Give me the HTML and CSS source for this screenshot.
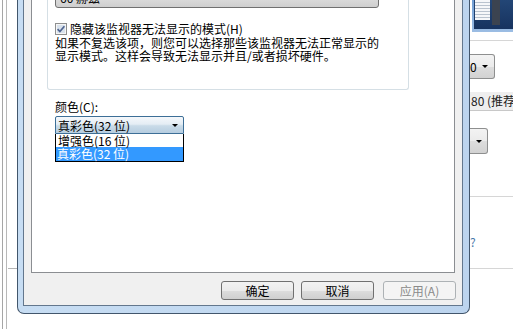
FILE: index.html
```html
<!DOCTYPE html>
<html lang="zh-CN">
<head>
  <meta charset="UTF-8" />
  <title>显示属性</title>
  <link rel="stylesheet" href="styles.css">
</head>
<body>
  <div class="desk">

    <!-- window behind, left edge -->
    <div class="bg-left">
      <div class="rail"></div>
      <div class="stub"></div>
    </div>

    <!-- dialog -->
    <div class="dialog">
      <div class="panel">
        <div class="content">
          <div class="group">
            <div class="combo combo-wide"><span>60 赫兹</span><i class="arrow"></i></div>
            <label class="check-row">
              <svg class="cb" width="12" height="12" viewBox="0 0 12 12">
                <rect x="0.5" y="0.5" width="11" height="11" fill="#f6f6f6" stroke="#8e8f8f"/>
                <rect x="2" y="2" width="8" height="8" fill="#d9e2ec"/>
                <path d="M2.6 6.2 L4.9 8.6 L9.4 3.2" fill="none" stroke="#4f6490" stroke-width="1.7"/>
              </svg>
              <span>隐藏该监视器无法显示的模式(H)</span>
            </label>
            <p class="note">如果不复选该项，则您可以选择那些该监视器无法正常显示的<br>显示模式。这样会导致无法显示并且/或者损坏硬件。</p>
          </div>

          <div class="color-field">
            <div class="field-label">颜色(C):</div>
            <div class="combo combo-focus"><span>真彩色(32 位)</span><i class="arrow"></i></div>
            <ul class="drop-list">
              <li>增强色(16 位)</li>
              <li class="selected">真彩色(32 位)</li>
            </ul>
          </div>
        </div>

        <div class="footer">
          <button>确定</button>
          <button>取消</button>
          <button class="btn-apply">应用(A)</button>
        </div>
      </div>
    </div>

    <!-- window behind, right edge -->
    <div class="bg-right">
      <div class="thumb">
        <div class="screen">
          <div class="doc"></div>
          <div class="strip"></div>
        </div>
      </div>
      <div class="rule rule-top"></div>
      <div class="mini-combo"><span>0</span><i class="arrow"></i></div>
      <div class="pref">80 (推荐</div>
      <div class="arrow-box"><i class="arrow"></i></div>
      <div class="rule rule-mid"></div>
      <div class="q">?</div>
      <div class="rule rule-low"></div>
    </div>

  </div>
</body>
</html>
```

FILE: styles.css
```css
* {
  box-sizing: border-box;
}

body {
  margin: 0;
  background: #fff;
  font-family: "Noto Sans CJK SC", sans-serif;
  font-size: 12px;
  line-height: 13px;
  color: #000;
  overflow: hidden;
}

.desk {
  display: flex;
  width: 513px;
  height: 329px;
}

/* left background */
.bg-left {
  display: flex;
  width: 17px;
  flex-shrink: 0;
}

.rail {
  margin-left: 2px;
  width: 5px;
  height: 100%;
  border-left: 1px solid #a6a6a6;
  border-right: 1px solid #b8b8b8;
}

.stub {
  margin-left: 1px;
  width: 9px;
  height: 269px;
  border-bottom: 1px solid #b4b4b4;
}

/* dialog frame */
.dialog {
  width: 453px;
  height: 314px;
  flex-shrink: 0;
  padding: 0 6px 7px 5px;
  background: linear-gradient(to right, #c7ddf3, #bcd4ee);
  border: 1px solid #42566c;
  border-top: none;
  border-radius: 0 0 7px 7px;
}

.panel {
  display: flex;
  flex-direction: column;
  height: 100%;
  background: #f0f0f0;
  border: 1px solid #63778d;
  border-top: none;
}

.content {
  height: 273px;
  margin: 0 7px;
  background: #fff;
  border: 1px solid #8b8e92;
  border-top: none;
}

.group {
  display: flow-root;
  width: 362px;
  margin-left: 15px;
  padding: 0 0 27px 7px;
  border: 1px solid #d5dfe5;
  border-top: none;
  border-radius: 0 0 3px 3px;
}

/* combo boxes */
.combo {
  display: flex;
  align-items: center;
  border: 1px solid #707070;
  border-radius: 3px;
  background: linear-gradient(#f2f2f2, #ebebeb 50%, #dddddd 51%, #cfcfcf);
}

.combo-wide {
  width: 324px;
  height: 22px;
  margin-top: -14px;
  padding-left: 4px;
}

.arrow {
  width: 0;
  height: 0;
  margin-left: auto;
  margin-right: 5px;
  border-left: 3px solid transparent;
  border-right: 3px solid transparent;
  border-top: 3px solid #000;
}

.check-row {
  display: flex;
  align-items: center;
  gap: 3px;
  height: 13px;
  margin-top: 14px;
}

.cb {
  flex-shrink: 0;
}

.note {
  margin: 1px 0 0;
  line-height: 13px;
}

.color-field {
  margin-left: 23px;
}

.field-label {
  margin-top: 10px;
}

.combo-focus {
  width: 129px;
  height: 18px;
  margin-top: 3px;
  padding-left: 2px;
  border-color: #3d6f97;
  border-radius: 2px 2px 0 0;
  background: linear-gradient(#f5f8fb, #e4edf4 45%, #c9dbe8 55%, #b6cde0);
}

.drop-list {
  width: 129px;
  margin: 0;
  padding: 0;
  list-style: none;
  background: #fff;
  border: 1px solid #000;
  border-top: none;
}

.drop-list li {
  height: 13px;
  padding-left: 2px;
  line-height: 13px;
}

.drop-list li.selected {
  height: 14px;
  padding-left: 1px;
  line-height: 14px;
  background: #3399ff;
  color: #fff;
}

/* buttons */
.footer {
  display: flex;
  justify-content: flex-end;
  align-items: flex-start;
  gap: 7px;
  height: 32px;
  padding: 8px 6px 0 0;
}

.footer button {
  width: 73px;
  height: 19px;
  margin: 0;
  padding: 0;
  font: inherit;
  line-height: 17px;
  color: #000;
  border: 1px solid #707070;
  border-radius: 3px;
  background: linear-gradient(#f2f2f2, #ebebeb 50%, #dddddd 51%, #cfcfcf);
}

.footer .btn-apply {
  margin-left: 2px;
  color: #8a8a8a;
  border-color: #adb2b5;
  background: #f4f4f4;
}

/* right background */
.bg-right {
  display: flex;
  flex-direction: column;
  width: 43px;
  flex-shrink: 0;
  overflow: hidden;
}

.thumb {
  height: 32px;
  margin-left: 2px;
  padding: 0 0 3px 2px;
  background: linear-gradient(#6f9dd4, #9cbde3);
}

.screen {
  display: flex;
  gap: 2px;
  height: 100%;
  padding-left: 1px;
  background: linear-gradient(#234676, #17335f);
}

.doc {
  width: 15px;
  height: 20px;
  background: repeating-linear-gradient(#f5f7fa 0 2px, #b9c3cf 2px 3px);
}

.strip {
  width: 8px;
  height: 25px;
  background: #3b4350;
}

.rule {
  height: 1px;
  background: #d6d6d6;
}

.rule-top {
  margin-top: 8px;
}

.mini-combo {
  display: flex;
  align-items: center;
  width: 25px;
  height: 25px;
  margin-top: 13px;
  border: 1px solid #8e8f8f;
  border-left: none;
  border-radius: 0 3px 3px 0;
  background: linear-gradient(#f3f3f3, #ebebeb 50%, #dddddd 51%, #d2d2d2);
}

.mini-combo .arrow {
  margin-right: 6px;
}

.pref {
  height: 19px;
  margin-top: 13px;
  padding-left: 1px;
  line-height: 18px;
  white-space: nowrap;
  color: #222;
  background: #eeeeee;
  border-bottom: 1px solid #c8c8c8;
}

.arrow-box {
  display: flex;
  align-items: center;
  width: 18px;
  height: 26px;
  margin-top: 17px;
  border: 1px solid #8e8f8f;
  border-left: none;
  border-radius: 0 3px 3px 0;
  background: linear-gradient(#f3f3f3, #ebebeb 50%, #dddddd 51%, #d2d2d2);
}

.arrow-box .arrow {
  margin-right: 5px;
}

.rule-mid {
  margin-top: 42px;
}

.q {
  height: 11px;
  margin-top: 39px;
  line-height: 11px;
  color: #4b79ab;
}

.rule-low {
  margin-top: 21px;
}
```
